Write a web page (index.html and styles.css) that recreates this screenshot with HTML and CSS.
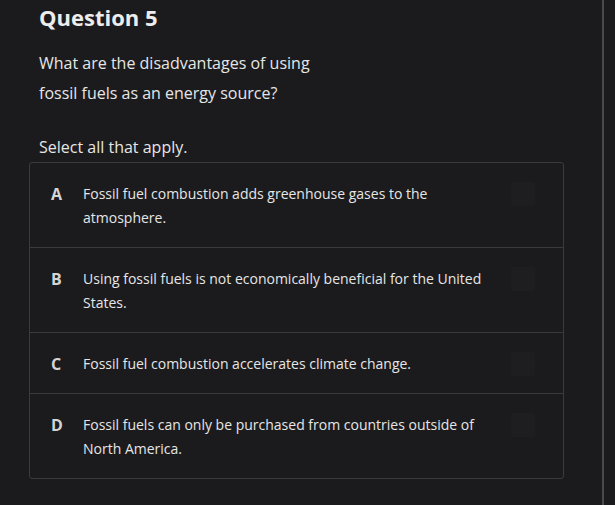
FILE: index.html
```html
<!DOCTYPE html>
<html>
<head>
<meta charset="utf-8">
<link rel="stylesheet" href="styles.css">
</head>
<body>
<div class="page">
  <main class="main">
    <h1 class="title">Question 5</h1>
    <p class="prompt">What are the disadvantages of using<br>fossil fuels as an energy source?</p>
    <p class="instr">Select all that apply.</p>
    <div class="options">
      <div class="opt">
        <span class="letter">A</span>
        <span class="text">Fossil fuel combustion adds greenhouse gases to the atmosphere.</span>
        <span class="box"></span>
      </div>
      <div class="opt">
        <span class="letter">B</span>
        <span class="text">Using fossil fuels is not economically beneficial for the United States.</span>
        <span class="box"></span>
      </div>
      <div class="opt">
        <span class="letter">C</span>
        <span class="text">Fossil fuel combustion accelerates climate change.</span>
        <span class="box"></span>
      </div>
      <div class="opt">
        <span class="letter">D</span>
        <span class="text">Fossil fuels can only be purchased from countries outside of North America.</span>
        <span class="box"></span>
      </div>
    </div>
  </main>
  <div class="side"></div>
</div>
</body>
</html>
```
FILE: styles.css
```css
html, body {
  margin: 0;
  padding: 0;
  background: #1b1b1d;
}
body {
  font-family: "Open Sans", "Noto Sans", sans-serif;
  color: #e6e6e6;
  width: 615px;
  height: 505px;
  overflow: hidden;
}
.page {
  display: flex;
  height: 505px;
}
.main {
  width: 604px;
  border-right: 2px solid #4a4a4c;
  box-sizing: border-box;
  padding: 0 0 0 29px;
}
.title {
  margin: 2px 0 0 10px;
  font-size: 22px;
  font-weight: 700;
  line-height: 30px;
  color: #ededed;
}
.prompt {
  margin: 16px 0 0 10px;
  font-size: 16px;
  line-height: 30px;
}
.instr {
  margin: 24px 0 0 10px;
  font-size: 16px;
  line-height: 30px;
}
.options {
  margin-top: 0;
  width: 535px;
  border: 1px solid #3b3b3d;
  border-radius: 3px;
  box-sizing: border-box;
}
.opt {
  display: flex;
  align-items: flex-start;
  padding: 19px 0 17px 21px;
  border-top: 1px solid #3b3b3d;
  font-size: 14px;
  line-height: 24px;
}
.opt:first-child {
  border-top: none;
}
.letter {
  width: 32px;
  flex: none;
  font-size: 16px;
  font-weight: 700;
  color: #d4d4d4;
}
.text {
  width: 410px;
  flex: none;
}
.box {
  margin-left: auto;
  margin-right: 28px;
  width: 24px;
  height: 24px;
  flex: none;
  background: #1e1e20;
  border-radius: 2px;
}
.side {
  flex: 1;
}
```
